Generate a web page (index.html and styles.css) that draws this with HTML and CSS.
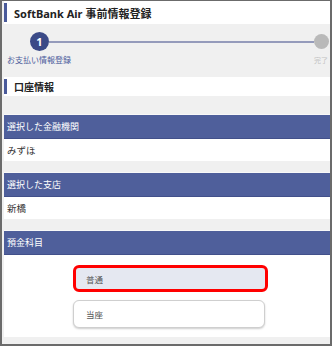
FILE: index.html
```html
<!DOCTYPE html>
<html lang="ja">
<head>
  <meta charset="UTF-8">
  <title>SoftBank Air 事前情報登録</title>
  <link rel="stylesheet" href="styles.css">
</head>
<body>
  <div class="frame">
    <header class="page-title">
      <h1>SoftBank Air 事前情報登録</h1>
    </header>

    <div class="stepper">
      <div class="track">
        <span class="step step-current">1</span>
        <span class="step-line"></span>
        <span class="step step-end"></span>
      </div>
      <div class="step-labels">
        <span class="label-current">お支払い情報登録</span>
        <span class="label-end">完了</span>
      </div>
    </div>

    <h2 class="section-title">口座情報</h2>

    <div class="panels">
      <div class="panel">
        <div class="panel-head">選択した金融機関</div>
        <div class="panel-body">みずほ</div>
      </div>
      <div class="panel">
        <div class="panel-head">選択した支店</div>
        <div class="panel-body">新橋</div>
      </div>
      <div class="panel">
        <div class="panel-head">預金科目</div>
        <div class="panel-body choices">
          <button class="choice choice-selected">普通</button>
          <button class="choice">当座</button>
        </div>
      </div>
    </div>
  </div>
</body>
</html>
```

FILE: styles.css
```css
* {
  box-sizing: border-box;
}
html, body {
  margin: 0;
  padding: 0;
  background-color: #fff;
}
.frame {
  width: 332px;
  height: 346px;
  border: 2px solid #6b6b6b;
  border-top-width: 1px;
  background-color: #f0f0f0;
  padding-left: 2px;
  overflow: hidden;
  font-family: "Noto Sans", "Noto Sans CJK JP", sans-serif;
  color: #333;
}
.page-title {
  display: flex;
  align-items: center;
  height: 23px;
  background-color: #fff;
}
.page-title::before {
  content: "";
  width: 3px;
  height: 19px;
  background-color: #4a5a9a;
  margin-right: 7px;
}
h1 {
  margin: 0;
  font-size: 11px;
  font-weight: bold;
  color: #222;
}

/* ステップ表示 */
.stepper {
  height: 53px;
  padding-top: 8px;
}
.track {
  display: flex;
  align-items: center;
  padding-left: 26px;
  padding-right: 1px;
  height: 19px;
}
.step {
  flex: none;
  border-radius: 50%;
}
.step-current {
  width: 19px;
  height: 19px;
  background-color: #3b4a87;
  color: #fff;
  font-size: 11px;
  font-weight: bold;
  line-height: 19px;
  text-align: center;
}
.step-line {
  flex: 1;
  height: 2px;
  background-color: #959bbb;
}
.step-end {
  width: 15px;
  height: 15px;
  background-color: #b9b9b9;
}
.step-labels {
  display: flex;
  justify-content: space-between;
  align-items: center;
  padding: 3px 2px 0 3px;
}
.label-current {
  font-size: 8px;
  color: #4b5b9b;
}
.label-end {
  font-size: 7px;
  color: #c2c2c2;
}

.section-title {
  display: flex;
  align-items: center;
  height: 19px;
  margin: 0;
  background-color: #fff;
  font-size: 10px;
  font-weight: bold;
  color: #222;
}
.section-title::before {
  content: "";
  width: 3px;
  height: 15px;
  background-color: #4a5a9a;
  margin-right: 7px;
}

/* 口座情報パネル */
.panels {
  display: flex;
  flex-direction: column;
  gap: 11px;
  padding-top: 18px;
}
.panel-head {
  height: 25px;
  display: flex;
  align-items: center;
  padding-left: 3px;
  background-color: #4f5f9b;
  border-top: 1px solid #f8f8f8;
  border-bottom: 1px solid #42508a;
  color: #fff;
  font-size: 9px;
}
.panel-body {
  height: 22px;
  display: flex;
  align-items: center;
  padding-left: 3px;
  background-color: #fff;
  font-size: 9.5px;
  color: #333;
}
.choices {
  height: 82px;
  flex-direction: column;
  align-items: flex-start;
  gap: 8px;
  padding: 10px 0 0 69px;
}
.choice {
  display: block;
  width: 192px;
  height: 28px;
  padding: 0 0 0 12px;
  text-align: left;
  font-family: inherit;
  font-size: 8.5px;
  color: #555;
  background-color: #fff;
  border: 1px solid #cfcfcf;
  border-radius: 6px;
  box-shadow: 0 1px 2px rgba(0, 0, 0, 0.2);
}
.choice-selected {
  width: 195px;
  height: 27px;
  padding-left: 10px;
  background-color: #e5e8f1;
  border: 3px solid #ff0000;
  box-shadow: none;
}
```
